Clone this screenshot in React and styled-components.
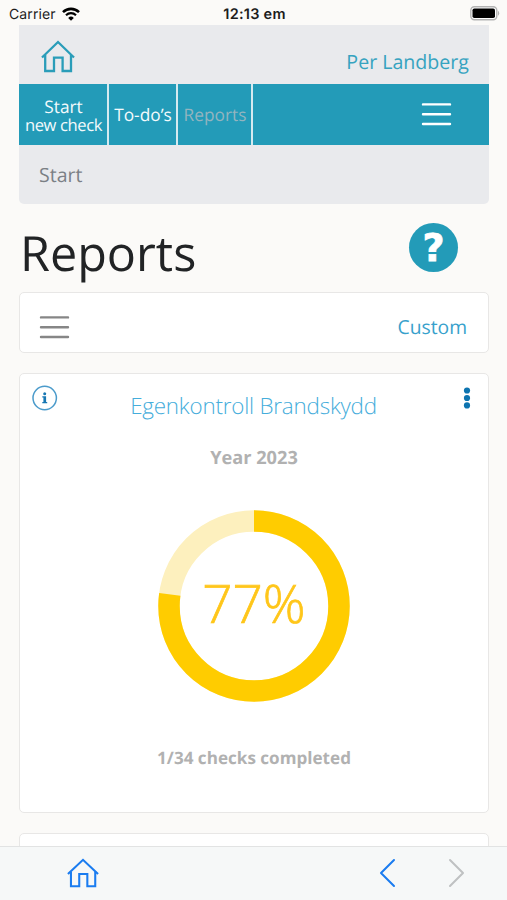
import React from 'react';
import styled, { createGlobalStyle } from 'styled-components';

const GlobalStyle = createGlobalStyle`
  * {
    box-sizing: border-box;
  }

  body {
    margin: 0;
    overflow: hidden;
    background: #fbfaf8;
    font-family: 'Open Sans', sans-serif;
    text-rendering: geometricPrecision;
  }
`;

const Screen = styled.div`
  height: 900px;
  display: flex;
  flex-direction: column;
  overflow: hidden;
  background: #fbfaf8;
`;

const StatusBar = styled.div`
  flex: none;
  height: 25px;
  padding: 3px 7px 0 9px;
  display: grid;
  grid-template-columns: 1fr auto 1fr;
  align-items: center;
  font-family: Inter, sans-serif;
  font-size: 14px;
  line-height: 24px;
  color: #1c1c1c;
`;

const Carrier = styled.div`
  display: flex;
  align-items: center;
  gap: 6px;
  letter-spacing: 0.1px;

  svg {
    margin-top: -3px;
  }
`;

const Time = styled.div`
  font-weight: 600;
  font-size: 14.5px;
  letter-spacing: 0.25px;
`;

const BatterySlot = styled.div`
  margin-top: -3px;
  display: flex;
  justify-content: flex-end;
`;

const Page = styled.main`
  flex: 1;
  min-height: 0;
  overflow: hidden;
  padding: 0 18px 0 19px;
`;

const Header = styled.header`
  height: 59px;
  padding: 0 20px 0 22px;
  display: flex;
  justify-content: space-between;
  background: #e9eaed;
`;

const HomeLink = styled.a`
  padding-top: 15px;
`;

const UserName = styled.a`
  padding-top: 23px;
  font-size: 19.6px;
  line-height: 28px;
  color: #36a3c0;
`;

const NavBar = styled.nav`
  height: 61px;
  display: flex;
  background: #239bb8;
`;

const NavItem = styled.a`
  width: ${(props) => props.$width}px;
  padding: 2px 0 0 1px;
  display: flex;
  flex-direction: column;
  align-items: center;
  justify-content: center;
  border-right: 2px solid #d5eaf0;
  font-size: 17.3px;
  line-height: 17px;
  text-align: center;
  white-space: nowrap;
  color: ${(props) => (props.$active ? '#93b4bf' : '#f3fafc')};
`;

const TightLine = styled.span`
  font-size: 16.6px;
  letter-spacing: -0.4px;
`;

const NavMenu = styled.div`
  margin: 18px 37.5px 0 auto;
`;

const Breadcrumb = styled.div`
  height: 59px;
  padding: 16px 20px;
  border-radius: 0 0 5px 5px;
  background: #e9eaed;
  font-size: 19.5px;
  line-height: 27px;
  color: #7b8085;
`;

const TitleRow = styled.div`
  height: 88px;
  padding: 19px 31px 0 1px;
  display: flex;
  justify-content: space-between;
`;

const Title = styled.h1`
  margin: 0;
  font-size: 48.5px;
  font-weight: 400;
  line-height: 61px;
  color: #212325;
`;

const HelpButton = styled.div`
  width: 49px;
  height: 49px;
  border-radius: 50%;
  background: #239bb8;
  color: #fff;
  font-family: 'DejaVu Sans', sans-serif;
  font-size: 38px;
  font-weight: 700;
  line-height: 50px;
  text-align: center;
  -webkit-text-stroke: 0.8px #fff;
`;

const Panel = styled.section`
  margin-bottom: 20px;
  border: 1.5px solid #e8e7e6;
  border-radius: 5px;
  background: #fff;
`;

const FilterPanel = styled(Panel)`
  height: 61px;
  padding: 0 21px 0 19px;
  display: flex;
  justify-content: space-between;
`;

const FilterMenu = styled.div`
  padding-top: 22px;
`;

const FilterLink = styled.a`
  padding-top: 20px;
  font-size: 19.3px;
  line-height: 28px;
  color: #38a1cc;
`;

const ReportPanel = styled(Panel)`
  height: 440px;
  display: flex;
  flex-direction: column;
  align-items: center;
`;

const ReportHeader = styled.div`
  align-self: stretch;
  height: 71px;
  padding: 11px 17px 0 12px;
  display: grid;
  grid-template-columns: 26px 1fr 8px;
  align-items: start;
`;

const ReportTitle = styled.h2`
  margin: 6px 14px 0 0;
  text-align: center;
  font-size: 22.4px;
  font-weight: 300;
  line-height: 30px;
  letter-spacing: -0.2px;
  color: #45addb;
`;

const Caption = styled.div`
  font-size: ${(props) => props.$size}px;
  font-weight: 700;
  line-height: 26px;
  color: #b1b1b1;
`;

const DonutBox = styled.div`
  width: 192px;
  height: 192px;
  margin: 39px 0 44px;
  display: grid;
  place-items: center;

  > * {
    grid-area: 1 / 1;
  }
`;

const DonutValue = styled.div`
  font-size: 53px;
  font-weight: 300;
  line-height: 60px;
  margin-top: -6px;
  color: #ffc61a;
  -webkit-text-stroke: 0.7px #ffc61a;
`;

const Toolbar = styled.footer`
  flex: none;
  height: 54px;
  padding: 11px 42px 0 67px;
  display: flex;
  align-items: flex-start;
  border-top: 1px solid #e2e3e3;
  background: #f6f8f8;
`;

const ToolbarSpacer = styled.div`
  flex: 1;
`;

const Forward = styled.div`
  margin-left: 52px;
`;

const HouseIcon = ({ width, height, color, weight }) => (
  <svg
    width={width}
    height={height}
    viewBox="0 0 34 33"
    preserveAspectRatio="none"
    fill="none"
    stroke={color}
    strokeWidth={weight}
    style={{ display: 'block' }}
  >
    <path d="M1 17.5 17 2 33 17.5" />
    <path d="M4.2 15V31H13V17.6H21.6V31H30V15" />
  </svg>
);

const WifiIcon = () => (
  <svg width="18" height="14" viewBox="0 0 18 14" fill="none" stroke="#000">
    <path d="M1 5.1a11.6 11.6 0 0 1 16 0" strokeWidth="2.6" />
    <path d="M4 8.2a7.3 7.3 0 0 1 10 0" strokeWidth="2.2" />
    <path d="M6.2 10.9a4.1 4.1 0 0 1 5.6 0L9 13.8Z" fill="#000" stroke="none" />
  </svg>
);

const BatteryIcon = () => (
  <svg width="30" height="15" viewBox="0 0 30 15">
    <rect x="0.8" y="0.8" width="26" height="12.9" rx="3.6" fill="#fff" stroke="#b3b3b3" strokeWidth="1.4" />
    <rect x="2.5" y="2.5" width="22.5" height="9.5" rx="1.8" fill="#000" />
    <path d="M28 4.8a3.2 3.2 0 0 1 0 5Z" fill="#b3b3b3" />
  </svg>
);

const MenuIcon = ({ color }) => (
  <svg width="31" height="24" viewBox="0 0 31 24" stroke={color} strokeWidth="2.4" strokeLinecap="round" style={{ display: 'block' }}>
    <path d="M2 2.4H29M2 12.2H29M2 22H29" />
  </svg>
);

const InfoIcon = () => (
  <svg width="26" height="26" viewBox="0 0 26 26" style={{ display: 'block' }}>
    <circle cx="12.7" cy="13" r="11.7" fill="none" stroke="#4b9bcb" strokeWidth="1.5" />
    <circle cx="12.7" cy="8.8" r="1.5" fill="#1777b3" />
    <path d="M10.3 11.3H14.1V17H15.2V18.3H10.3V17H11.4V12.6H10.3Z" fill="#1777b3" />
  </svg>
);

const DotsIcon = () => (
  <svg width="8" height="24" viewBox="0 0 8 24" fill="#0d74b0">
    <circle cx="4" cy="5.5" r="3.1" />
    <circle cx="4" cy="13" r="3.1" />
    <circle cx="4" cy="20.4" r="3.1" />
  </svg>
);

const ChevronIcon = ({ color, forward }) => (
  <svg width="17" height="30" viewBox="0 0 17 30" fill="none" stroke={color} strokeWidth="2" strokeLinecap="round" strokeLinejoin="round">
    <path d={forward ? 'M2 2 15 15 2 28' : 'M15 2 2 15 15 28'} />
  </svg>
);

const Donut = ({ value }) => (
  <DonutBox>
    <svg width="192" height="192" viewBox="0 0 192 192" fill="none" strokeWidth="21.5">
      <circle cx="96" cy="96" r="85" stroke="#fdf0be" />
      <circle
        cx="96"
        cy="96"
        r="85"
        stroke="#fc0"
        pathLength="100"
        strokeDasharray={`${value} 100`}
        transform="rotate(-90 96 96)"
      />
    </svg>
    <DonutValue>{Math.floor(value)}%</DonutValue>
  </DonutBox>
);

const App = () => {
  return (
    <Screen>
      <GlobalStyle />
      <StatusBar>
        <Carrier>
          Carrier
          <WifiIcon />
        </Carrier>
        <Time>12:13 em</Time>
        <BatterySlot>
          <BatteryIcon />
        </BatterySlot>
      </StatusBar>
      <Page>
        <Header>
          <HomeLink>
            <HouseIcon width={34} height={33} color="#2a9db9" weight={2.3} />
          </HomeLink>
          <UserName>Per Landberg</UserName>
        </Header>
        <NavBar>
          <NavItem $width={90}>
            <span>Start</span>
            <TightLine>new check</TightLine>
          </NavItem>
          <NavItem $width={69}>To-do’s</NavItem>
          <NavItem $width={75} $active>
            Reports
          </NavItem>
          <NavMenu>
            <MenuIcon color="#fff" />
          </NavMenu>
        </NavBar>
        <Breadcrumb>Start</Breadcrumb>
        <TitleRow>
          <Title>Reports</Title>
          <HelpButton>?</HelpButton>
        </TitleRow>
        <FilterPanel>
          <FilterMenu>
            <MenuIcon color="#868686" />
          </FilterMenu>
          <FilterLink>Custom</FilterLink>
        </FilterPanel>
        <ReportPanel>
          <ReportHeader>
            <InfoIcon />
            <ReportTitle>Egenkontroll Brandskydd</ReportTitle>
            <DotsIcon />
          </ReportHeader>
          <Caption $size={18.2}>Year 2023</Caption>
          <Donut value={77.2} />
          <Caption $size={17.1}>1/34 checks completed</Caption>
        </ReportPanel>
        <ReportPanel />
      </Page>
      <Toolbar>
        <HouseIcon width={32} height={30} color="#1a7cf0" weight={2.2} />
        <ToolbarSpacer />
        <ChevronIcon color="#1a7cf0" />
        <Forward>
          <ChevronIcon color="#bfc1c2" forward />
        </Forward>
      </Toolbar>
    </Screen>
  );
};

export default App;
